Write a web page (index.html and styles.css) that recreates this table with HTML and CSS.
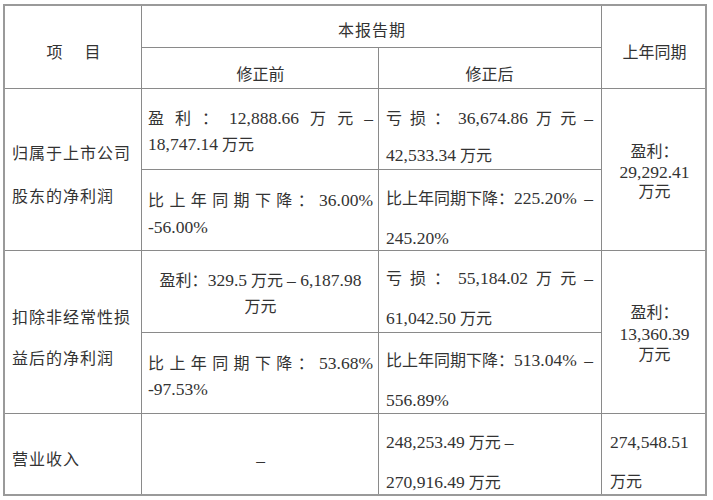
FILE: index.html
```html
<!DOCTYPE html>
<html lang="zh-CN">
<head>
<meta charset="utf-8">
<title>业绩预告修正</title>
<link rel="stylesheet" href="styles.css">
</head>
<body>
<div class="sheet">
  <div class="cell c1 rs2 center p37"><div class="l"><span class="sp">项</span>目</div></div>
  <div class="cell cs2 center p15"><div class="l wide">本报告期</div></div>
  <div class="cell c4 rs2 center p37"><div class="l">上年同期</div></div>
  <div class="cell center p17"><div class="l">修正前</div></div>
  <div class="cell c3 center p17"><div class="l">修正后</div></div>

  <div class="cell c1 rs2 p55 g23"><div class="l">归属于上市公司</div><div class="l">股东的净利润</div></div>
  <div class="cell c2 p19 g6">
    <div class="l j"><span>盈</span><span>利</span><span>：</span><span class="n">12,888.66</span><span>万</span><span>元</span><span class="n">–</span></div>
    <div class="l"><span class="n">18,747.14</span> 万元</div>
  </div>
  <div class="cell c3 p19 g17">
    <div class="l j"><span>亏</span><span>损</span><span>：</span><span class="n">36,674.86</span><span>万</span><span>元</span><span class="n">–</span></div>
    <div class="l"><span class="n">42,533.34</span> 万元</div>
  </div>
  <div class="cell c4 rs2 center p53 g0">
    <div class="l">盈利：</div>
    <div class="l"><span class="n">29,292.41</span></div>
    <div class="l">万元</div>
  </div>
  <div class="cell c2 p20 g7">
    <div class="l j"><span>比</span><span>上</span><span>年</span><span>同</span><span>期</span><span>下</span><span>降</span><span>：</span><span class="n">36.00%</span></div>
    <div class="l"><span class="n">-56.00%</span></div>
  </div>
  <div class="cell c3 p18 g20">
    <div class="l j"><span>比上年同期下降：<span class="n">225.20%</span></span><span class="n">–</span></div>
    <div class="l"><span class="n">245.20%</span></div>
  </div>

  <div class="cell c1 rs2 p57 g21"><div class="l">扣除非经常性损</div><div class="l">益后的净利润</div></div>
  <div class="cell c2 center p19 g7">
    <div class="l">盈利：<span class="n">329.5</span> 万元 <span class="n">– 6,187.98</span></div>
    <div class="l">万元</div>
  </div>
  <div class="cell c3 p17 g20">
    <div class="l j"><span>亏</span><span>损</span><span>：</span><span class="n">55,184.02</span><span>万</span><span>元</span><span class="n">–</span></div>
    <div class="l"><span class="n">61,042.50</span> 万元</div>
  </div>
  <div class="cell c4 rs2 center p52 g1">
    <div class="l">盈利：</div>
    <div class="l"><span class="n">13,360.39</span></div>
    <div class="l">万元</div>
  </div>
  <div class="cell c2 p20 g6">
    <div class="l j"><span>比</span><span>上</span><span>年</span><span>同</span><span>期</span><span>下</span><span>降</span><span>：</span><span class="n">53.68%</span></div>
    <div class="l"><span class="n">-97.53%</span></div>
  </div>
  <div class="cell c3 p17 g20">
    <div class="l j"><span>比上年同期下降：<span class="n">513.04%</span></span><span class="n">–</span></div>
    <div class="l"><span class="n">556.89%</span></div>
  </div>

  <div class="cell c1 p36"><div class="l">营业收入</div></div>
  <div class="cell c2 center p36"><div class="l"><span class="n">–</span></div></div>
  <div class="cell c3 p18 g20">
    <div class="l"><span class="n">248,253.49</span> 万元 <span class="n">–</span></div>
    <div class="l"><span class="n">270,916.49</span> 万元</div>
  </div>
  <div class="cell c4 p18 g20">
    <div class="l"><span class="n">274,548.51</span></div>
    <div class="l">万元</div>
  </div>
</div>
</body>
</html>
```

FILE: styles.css
```css
html, body {
  margin: 0;
  padding: 0;
  background: #ffffff;
}

body {
  font-family: "Liberation Serif", "Noto Sans CJK SC", serif;
  font-size: 16px;
  color: #333333;
}

.sheet {
  display: grid;
  grid-template-columns: 136px 236px 222px 103px;
  grid-template-rows: 41px 40px 80px 80px 81px 80px 80px;
  gap: 1px;
  background: #8a8a8a;
  border: 2px solid #9a9a9a;
  width: max-content;
  margin: 4px 0 0 3px;
}

.cell {
  background: #ffffff;
  padding: 0 5px 0 6px;
  overflow: hidden;
}

.c1 { padding-left: 7px; letter-spacing: 1px; }
.c3 { padding-left: 7px; padding-right: 8px; }
.c4 { padding-left: 8px; padding-right: 6px; }

.rs2 { grid-row: span 2; }
.cs2 { grid-column: span 2; }

.center { text-align: center; }

.l {
  height: 20px;
  line-height: 20px;
  white-space: nowrap;
}

.j {
  display: flex;
  justify-content: space-between;
  align-items: baseline;
}

.n {
  font-family: "Liberation Serif", serif;
  font-size: 17.5px;
  letter-spacing: 0;
}

.sp { margin-right: 21px; }
.wide { letter-spacing: 1px; }

.p15 { padding-top: 15px; }
.p17 { padding-top: 17px; }
.p18 { padding-top: 18px; }
.p19 { padding-top: 19px; }
.p20 { padding-top: 20px; }
.p36 { padding-top: 36px; }
.p37 { padding-top: 37px; }
.p52 { padding-top: 52px; }
.p53 { padding-top: 53px; }
.p55 { padding-top: 55px; }
.p57 { padding-top: 57px; }

.g0 .l + .l { margin-top: 0; }
.g1 .l + .l { margin-top: 1px; }
.g6 .l + .l { margin-top: 6px; }
.g7 .l + .l { margin-top: 7px; }
.g17 .l + .l { margin-top: 17px; }
.g20 .l + .l { margin-top: 20px; }
.g21 .l + .l { margin-top: 21px; }
.g23 .l + .l { margin-top: 23px; }
```
